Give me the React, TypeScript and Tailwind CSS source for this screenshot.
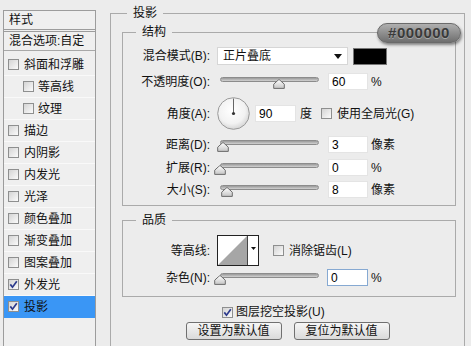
import React from "react";

function Box({ checked }: { checked?: boolean }) {
  return (
    <span className="flex h-[11px] w-[11px] shrink-0 items-center justify-center border border-[#8e8f8f] bg-linear-to-br from-[#d4d4d4] to-[#fbfbfb]">
      {checked ? (
        <svg width="9" height="9" viewBox="0 0 9 9">
          <path d="M1.3 4.4 L3.5 7.2 L7.8 1.3" fill="none" stroke="#2c3a8c" strokeWidth="1.7" />
        </svg>
      ) : null}
    </span>
  );
}

function Slider({ x }: { x: number }) {
  return (
    <div className="relative h-[17px] w-[99px] shrink-0">
      <div className="absolute left-0 right-0 top-[4px] h-[5px] rounded-full border border-[#8c8c8c] bg-linear-to-b from-[#9a9a9a] to-[#d2d2d2]" />
      <svg className="absolute top-[6px]" style={{ left: x - 6 }} width="12" height="10" viewBox="0 0 12 10">
        <defs>
          <linearGradient id="thumbg" x1="0" y1="0" x2="0" y2="1">
            <stop offset="0" stopColor="#ffffff" />
            <stop offset="1" stopColor="#c4c4c4" />
          </linearGradient>
        </defs>
        <path d="M6 0.8 Q6.6 0.8 7.2 1.4 L11.3 5.2 V9.4 H0.7 V5.2 L4.8 1.4 Q5.4 0.8 6 0.8 Z" fill="url(#thumbg)" stroke="#6c6c6c" strokeWidth="1" />
      </svg>
    </div>
  );
}

function Field({ v, focus, wide }: { v: string; focus?: boolean; wide?: boolean }) {
  const base = "flex h-[17px] shrink-0 items-center bg-white pl-[3px] text-[12px] text-black ";
  const w = wide ? "w-[41px] " : "w-[40px] ";
  const b = focus ? "border border-[#86a9d2]" : "border border-[#e4e4e4]";
  return <div className={base + w + b}>{v}</div>;
}

function Label({ children }: { children: React.ReactNode }) {
  return <div className="w-[87px] shrink-0 whitespace-nowrap text-right text-[12px] leading-[16px]">{children}</div>;
}

function SliderRow({ label, x, v, unit, extra }: { label: string; x: number; v: string; unit: string; extra?: string }) {
  return (
    <div className={"flex h-[17px] items-center " + (extra ?? "")}>
      <Label>{label}</Label>
      <div className="ml-[10px]">
        <Slider x={x} />
      </div>
      <div className="ml-[9px]">
        <Field v={v} />
      </div>
      <span className="ml-[3px] text-[12px] leading-[16px]">{unit}</span>
    </div>
  );
}

const leftItems: { t: string; sub?: boolean; checked?: boolean; sel?: boolean }[] = [
  { t: "斜面和浮雕" },
  { t: "等高线", sub: true },
  { t: "纹理", sub: true },
  { t: "描边" },
  { t: "内阴影" },
  { t: "内发光" },
  { t: "光泽" },
  { t: "颜色叠加" },
  { t: "渐变叠加" },
  { t: "图案叠加" },
  { t: "外发光", checked: true },
  { t: "投影", checked: true, sel: true },
];

export default function App() {
  return (
    <div className="relative flex h-[346px] w-[471px] items-start overflow-hidden bg-[#ececec] font-['Liberation_Sans','Noto_Sans_CJK_SC',sans-serif] text-[12px] text-[#111]">
      {/* Left styles list */}
      <div className="ml-[3px] mt-[10px] h-[345px] w-[93px] shrink-0 border border-[#9c9c9c] bg-[#efefef]">
        <div className="flex h-[21px] items-center border-b-[3px] border-double border-[#9c9c9c] pl-[5px] text-[12px]">样式</div>
        <div className="flex h-[19px] items-center border-b border-[#a8a8a8] pl-[5px] text-[12px] whitespace-nowrap">混合选项:自定</div>
        <div className="pt-[3px]">
          {leftItems.map((it) => (
            <div
              key={it.t}
              className={
                "flex h-[22px] items-center border-b whitespace-nowrap " +
                (it.sel ? "bg-[#3a96f5] border-[#3a96f5] " : "border-[#f9f9f9] ") +
                (it.sub ? "pl-[19px]" : "pl-[4px]")
              }
            >
              <Box checked={it.checked} />
              <span className={"text-[12px] " + (it.sub ? "ml-[4px]" : "ml-[5px]")}>{it.t}</span>
            </div>
          ))}
        </div>
      </div>

      {/* Right group: 投影 */}
      <fieldset className="ml-[14px] mt-[5px] h-[360px] w-[355px] shrink-0 border border-[#aaaaaa]">
        <legend className="ml-[16px] px-[6px] text-[12px] leading-[16px]">投影</legend>

        {/* 结构 */}
        <fieldset className="ml-[11px] mt-[3px] w-[334px] border border-[#aaaaaa] pb-[7px]">
          <legend className="ml-[13px] px-[6px] text-[12px] leading-[16px]">结构</legend>
          <div className="mt-[7px] flex h-[18px] items-center">
            <Label>混合模式(B):</Label>
            <div className="ml-[7px] flex h-[18px] w-[131px] items-center justify-between border border-[#d6d6d6] bg-white pl-[5px] pr-[5px]">
              <span className="text-[12px]">正片叠底</span>
              <svg width="8" height="5" viewBox="0 0 8 5">
                <path d="M0 0 H8 L4 5 Z" fill="#111" />
              </svg>
            </div>
            <div className="ml-[5px] h-[17px] w-[34px] border border-[#777] bg-black" />
          </div>

          <SliderRow label="不透明度(O):" x={59} v="60" unit="%" extra="mt-[8px]" />

          <div className="mt-[7px] flex h-[33px] items-center">
            <Label>角度(A):</Label>
            <div className="ml-[7px] shrink-0">
              <svg width="33" height="33" viewBox="0 0 33 33">
                <defs>
                  <radialGradient id="dialg" cx="0.45" cy="0.4" r="0.6">
                    <stop offset="0" stopColor="#ffffff" />
                    <stop offset="0.7" stopColor="#f2f2f2" />
                    <stop offset="1" stopColor="#d6d6d6" />
                  </radialGradient>
                </defs>
                <circle cx="16.5" cy="16.5" r="15.8" fill="url(#dialg)" stroke="#9a9a9a" strokeWidth="1" />
                <line x1="16.5" y1="16.5" x2="16.5" y2="1.5" stroke="#666" strokeWidth="1" />
                <circle cx="16.5" cy="16.5" r="1.6" fill="#333" />
              </svg>
            </div>
            <div className="ml-[5px]">
              <Field v="90" wide />
            </div>
            <span className="ml-[4px] text-[12px] leading-[16px]">度</span>
            <div className="ml-[9px]">
              <Box />
            </div>
            <span className="ml-[5px] whitespace-nowrap text-[12px] leading-[16px]">使用全局光(G)</span>
          </div>

          <SliderRow label="距离(D):" x={3} v="3" unit="像素" extra="mt-[6px]" />
          <SliderRow label="扩展(R):" x={0} v="0" unit="%" extra="mt-[6px]" />
          <SliderRow label="大小(S):" x={7} v="8" unit="像素" extra="mt-[5px]" />
        </fieldset>

        {/* 品质 */}
        <fieldset className="ml-[11px] mt-[6px] w-[334px] border border-[#aaaaaa] pb-[10px]">
          <legend className="ml-[13px] px-[6px] text-[12px] leading-[16px]">品质</legend>
          <div className="mt-[7px] flex h-[31px] items-center">
            <Label>等高线:</Label>
            <div className="ml-[7px] flex h-[31px] w-[42px] shrink-0 border border-[#222] bg-white">
              <svg width="29" height="29" viewBox="0 0 29 29" className="shrink-0">
                <polygon points="0,29 29,0 29,29" fill="#a6a6a6" />
              </svg>
              <div className="flex w-[11px] items-start justify-center border-l border-[#444] pt-[11px]">
                <svg width="5" height="3" viewBox="0 0 5 3">
                  <path d="M0 0 H5 L2.5 3 Z" fill="#111" />
                </svg>
              </div>
            </div>
            <div className="ml-[14px]">
              <Box />
            </div>
            <span className="ml-[5px] whitespace-nowrap text-[12px] leading-[16px]">消除锯齿(L)</span>
          </div>
          <div className="mt-[3px] flex h-[17px] items-center">
            <Label>杂色(N):</Label>
            <div className="ml-[10px]">
              <Slider x={0} />
            </div>
            <div className="ml-[8px]">
              <Field v="0" focus wide />
            </div>
            <span className="ml-[3px] text-[12px] leading-[16px]">%</span>
          </div>
        </fieldset>

        <div className="ml-[111px] mt-[8px] flex h-[14px] items-center">
          <Box checked />
          <span className="ml-[3px] whitespace-nowrap text-[12px] leading-[16px]">图层挖空投影(U)</span>
        </div>

        <div className="mt-[3px] flex justify-center gap-[12px]">
          <button className="flex h-[18px] w-[96px] items-center justify-center rounded-[3px] border border-[#707070] bg-linear-to-b from-[#f6f6f6] to-[#dadada] text-[12px] leading-[16px] text-[#111]">
            设置为默认值
          </button>
          <button className="flex h-[18px] w-[96px] items-center justify-center rounded-[3px] border border-[#707070] bg-linear-to-b from-[#f6f6f6] to-[#dadada] text-[12px] leading-[16px] text-[#111]">
            复位为默认值
          </button>
        </div>
      </fieldset>

      {/* Colour annotation badge */}
      <div className="absolute left-[377px] top-[23px] flex h-[20px] w-[84px] items-center justify-center rounded-full border border-[#6a6a6a] bg-linear-to-b from-[#b0b0b0] to-[#6f6f6f] font-['Liberation_Sans',sans-serif] text-[15px] font-bold tracking-[0.5px] text-[#3a3a3a] shadow-[1px_2px_3px_rgba(0,0,0,0.45)] [text-shadow:0_1px_0_rgba(255,255,255,0.35)]">
        #000000
      </div>
    </div>
  );
}
